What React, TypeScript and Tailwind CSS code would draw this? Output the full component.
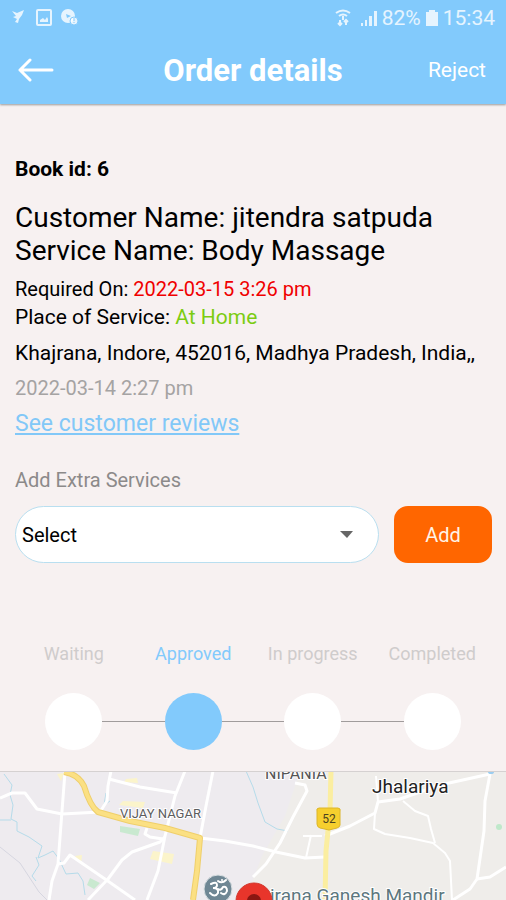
import { useState } from 'react'

interface Step {
  label: string
  active: boolean
}

const steps: Step[] = [
  { label: 'Waiting', active: false },
  { label: 'Approved', active: true },
  { label: 'In progress', active: false },
  { label: 'Completed', active: false },
]

const whiteRoads = [
  'M0 27 L12 22 L25 22 L37 38 L62 43 L100 41',
  'M65 1 L62 40 L58 93 L52 110 L49 129',
  'M111 0 L108 15 L107 30 L100 41',
  'M109 8 L140 16 L177 22',
  'M185 0 L175 25 L165 65 L158 100 L147 129',
  'M213 0 L206 35 L200 67',
  'M200 67 L225 70 L253 75 L276 81 L305 87 L325 86',
  'M58 93 L64 92 L70 84 L105 108 L135 129',
  'M88 129 L108 108 L122 89 L132 81 L160 71 L165 66',
  'M147 57 L145 63 L150 66 L163 68',
  'M253 106 L266 93 L280 72 L293 46 L307 20 L305 14 L295 12',
  'M325 65 L350 55 L375 42 L378 31 L400 28 L440 14 L490 3',
  'M490 3 L485 30 L484 60 L477 108 L470 118 L453 129',
  'M477 108 L490 106 L506 96',
]

const thinRoads = [
  'M303 65 L322 65',
  'M311 64 L306 87',
  'M376 5 L378 31',
  'M375 42 L374 58 L385 63 L410 67 L433 72 L445 82 L450 90 L452 129',
  'M403 30 L415 40 L428 45 L431 58 L435 72',
]

const streams = [
  'M4 3 L12 14 L10 24 L13 34 L11 48 L17 51 L17 60 L29 66 L42 75 L38 87 L45 84 L53 80 L59 88 L66 103 L78 102 L83 110 L85 124',
  'M0 49 L11 49',
  'M36 86 L39 94 L32 105 L36 110',
  'M253 16 L258 32 L265 51 L277 58 L288 60',
  'M246 0 L253 16',
  'M106 22 L104 34 L110 30',
]

function StatusBar() {
  return (
    <div className="flex h-9 items-center justify-between pl-2 pr-[11px] text-white/80">
      <div className="flex items-center gap-2">
        <svg width="20" height="18" viewBox="0 0 20 18" fill="currentColor" aria-hidden="true">
          <path d="M4 2 L9 4 L16 1 L14 6 L11 10 L10 14 L7 13 L9 10 L5 8 L8 7 Z" />
        </svg>
        <svg width="16" height="18" viewBox="0 0 16 18" fill="none" stroke="currentColor" strokeWidth="2" aria-hidden="true">
          <rect x="1" y="1" width="14" height="15" rx="1" />
          <path d="M4 13 V11 L7 9 L9 11 L11 8 L12 10 V13 Z" fill="currentColor" stroke="none" />
        </svg>
        <svg width="20" height="18" viewBox="0 0 20 18" aria-hidden="true">
          <circle cx="8" cy="7" r="7" fill="currentColor" />
          <path d="M6 5 L11 7 L7 9 Z" fill="#82cafc" />
          <circle cx="14" cy="12" r="4" fill="currentColor" stroke="#82cafc" />
          <path d="M14 9 V12 M14 13 V14" stroke="#82cafc" />
        </svg>
      </div>
      <div className="flex items-center gap-1">
        <svg className="mr-1" width="18" height="20" viewBox="0 0 18 20" fill="none" stroke="currentColor" strokeWidth="2" aria-hidden="true">
          <path d="M2 5 Q9 0 16 5 M5 8 Q9 5 13 8" />
          <path d="M9 8 V12" />
          <path d="M6 12 V17 M4 15 L6 17 L8 15 M12 17 V12 M10 14 L12 12 L14 14" />
        </svg>
        <svg width="18" height="18" viewBox="0 0 18 18" fill="currentColor" aria-hidden="true">
          <path d="M1 14h2v3h-2z M5 11h2v6h-2z M9 7h3v10h-3z M14 2h3v15h-3z" />
        </svg>
        <span className="text-[21px] leading-6">82%</span>
        <svg width="14" height="18" viewBox="0 0 14 18" fill="currentColor" aria-hidden="true">
          <path d="M4 1h6v2h3v14h-12v-14h3z" />
        </svg>
        <span className="text-[21px] leading-6">15:34</span>
      </div>
    </div>
  )
}

function Header() {
  return (
    <header className="bg-[#82cafc] shadow-[0_1px_2px_#9a9a9a]">
      <StatusBar />
      <div className="grid h-17 grid-cols-[1fr_auto_1fr] items-center px-4 pt-0.5 text-white">
        <button type="button" aria-label="Back" className="justify-self-start">
          <svg width="40" height="26" viewBox="0 0 40 26" fill="none" stroke="currentColor" strokeWidth="3" strokeLinecap="round" strokeLinejoin="round">
            <path d="M36 12 H4 M14 2 L4 12 L14 22" />
          </svg>
        </button>
        <h1 className="text-[31px] font-bold">Order details</h1>
        <button type="button" className="justify-self-end pr-1 text-[21px]">Reject</button>
      </div>
    </header>
  )
}

function OrderInfo() {
  return (
    <section className="px-[15px] pt-[49px] text-black">
      <h2 className="text-[21px] leading-8 font-bold">Book id: 6</h2>
      <div className="mt-4 text-[28px] leading-[33px]">
        <p>Customer Name: jitendra satpuda</p>
        <p>Service Name: Body Massage</p>
      </div>
      <div className="mt-2 text-[21px] leading-7">
        <p className="text-xl leading-7">
          Required On: <span className="text-[#f00000]">2022-03-15 3:26 pm</span>
        </p>
        <p>
          Place of Service: <span className="text-[#7ccc12]">At Home</span>
        </p>
        <p className="mt-2 whitespace-nowrap">Khajrana, Indore, 452016, Madhya Pradesh, India,,</p>
        <p className="mt-[7px] text-xl leading-7 text-[#a5a3a3]">2022-03-14 2:27 pm</p>
      </div>
      <a href="#reviews" className="mt-2 block text-[23px] leading-7 text-[#82c8f8] underline">
        See customer reviews
      </a>
    </section>
  )
}

function ExtraServices() {
  const [service, setService] = useState('')

  return (
    <section className="pt-7 pr-[14px] pl-[15px]">
      <label htmlFor="service" className="block text-xl leading-7 text-[#8c8a8a]">
        Add Extra Services
      </label>
      <div className="mt-3 flex gap-[15px]">
        <div className="relative flex-1">
          <select
            id="service"
            value={service}
            onChange={(e) => setService(e.target.value)}
            className="block h-[57px] w-full appearance-none rounded-full border border-[#b9dff0] bg-white pl-[6px] text-xl text-black"
          >
            <option value="">Select</option>
          </select>
          <svg className="pointer-events-none absolute top-6 right-[26px]" width="13" height="8" viewBox="0 0 13 8" fill="#666" aria-hidden="true">
            <path d="M0 1 H13 L7 8 Z" />
          </svg>
        </div>
        <button type="button" className="h-[57px] w-[98px] rounded-[14px] bg-[#ff6600] text-xl text-[#fff3e6]">
          Add
        </button>
      </div>
    </section>
  )
}

function Progress() {
  return (
    <ol className="mt-[77px] grid grid-cols-4 px-[14px] pb-[21px]">
      {steps.map((step, index) => (
        <li key={step.label}>
          <p className={`text-center text-lg leading-7 whitespace-nowrap ${step.active ? 'text-[#82cafc]' : 'text-[#cfcccc]'}`}>
            {step.label}
          </p>
          <div className="mt-[25px] flex items-center">
            <span className={`h-px flex-1 ${index === 0 ? 'bg-transparent' : 'bg-[#a09c9c]'}`} />
            <span className={`size-[57px] rounded-full ${step.active ? 'bg-[#82cafc]' : 'bg-white'}`} />
            <span className={`h-px flex-1 ${index === steps.length - 1 ? 'bg-transparent' : 'bg-[#a09c9c]'}`} />
          </div>
        </li>
      ))}
    </ol>
  )
}

function ServiceMap() {
  return (
    <svg viewBox="0 0 506 129" className="block w-full" role="img" aria-label="Service location map">
      <rect width="506" height="129" fill="#efedea" />
      <path d="M0 0 H300 L285 45 L262 85 L245 129 H0 Z" fill="#eeebef" />

      {/* built-up areas and parks */}
      <path d="M123 30 L145 31 L143 37 L119 34 Z M126 8 L137 7 L138 12 L124 11 Z M153 80 L174 83 L172 93 L150 88 Z M57 3 L64 2 L61 10 Z M75 85 L82 84 L81 93 Z" fill="#fbf4cb" />
      <path d="M120 55 L140 58 L138 65 L120 61 Z M90 107 L100 112 L94 118 L87 114 Z" fill="#c9e9d0" />
      <circle cx="499" cy="56" r="3" fill="#bfe8ca" />
      <path d="M0 76 L20 92 L39 121 L47 129" fill="none" stroke="#d6d6e0" />

      <g fill="none" stroke="#b5dbea">
        {streams.map((d) => (
          <path key={d} d={d} />
        ))}
      </g>
      <g fill="none" stroke="#fff" strokeWidth="3" strokeLinejoin="round">
        {whiteRoads.map((d) => (
          <path key={d} d={d} />
        ))}
      </g>
      <g fill="none" stroke="#fff" strokeWidth="2" strokeLinejoin="round">
        {thinRoads.map((d) => (
          <path key={d} d={d} />
        ))}
      </g>

      <path d="M331 0 L330 40 L326 80 L325 129" fill="none" stroke="#fbeea0" strokeWidth="5" />
      <g fill="none" strokeLinejoin="round">
        <path d="M64 1 Q78 3 84 15 Q90 35 98 41 L130 50 L165 57 L200 67 L197 100 L193 129" stroke="#efcf6b" strokeWidth="6" />
        <path d="M64 1 Q78 3 84 15 Q90 35 98 41 L130 50 L165 57 L200 67 L197 100 L193 129" stroke="#fbe083" strokeWidth="4" />
      </g>
      <ellipse cx="491" cy="1" rx="3" ry="2" fill="#9bcdf0" />

      <path d="M319 37 H338 Q341 37 340 41 V54 Q340 56 337 57 L329 59 L320 57 Q317 56 317 53 V41 Q316 37 319 37 Z" fill="#f6cf2e" stroke="#dcb62a" />
      <text x="329" y="52" textAnchor="middle" fontSize="12" fill="#4a4220">52</text>

      <g stroke="#fff" strokeWidth="2" paintOrder="stroke">
        <text x="120" y="47" fontSize="13" fill="#5c5c5e">VIJAY NAGAR</text>
        <text x="265" y="8" fontSize="16" fill="#555">NIPANIA</text>
        <text x="372" y="22" fontSize="19" fill="#222">Jhalariya</text>
        <text x="270" y="131" fontSize="19" fill="#5d777e">irana Ganesh Mandir</text>
      </g>

      <circle cx="218" cy="118" r="14" fill="#6f8794" stroke="#d9dfe2" />
      <g fill="none" stroke="#fff" strokeWidth="2" strokeLinecap="round">
        <path d="M211 113 Q217 110 217 114 Q217 117 213 117 Q219 117 218 122 Q215 127 210 122" />
        <path d="M218 118 Q221 120 223 116 Q227 115 227 120 Q225 125 221 122" />
        <path d="M218 110 Q222 113 226 109" />
      </g>
      <circle cx="222" cy="109" r="1" fill="#fff" />

      <circle cx="254" cy="130" r="18" fill="#e8352b" stroke="#d23a30" />
      <circle cx="254" cy="130" r="7" fill="#8a1712" />
      <path d="M0 0 H506" stroke="#d5d1d1" strokeWidth="2" />
    </svg>
  )
}

export default function App() {
  return (
    <div className="min-h-screen bg-[#f7f1f1] font-[Roboto,sans-serif]">
      <Header />
      <main>
        <OrderInfo />
        <ExtraServices />
        <Progress />
        <ServiceMap />
      </main>
    </div>
  )
}
